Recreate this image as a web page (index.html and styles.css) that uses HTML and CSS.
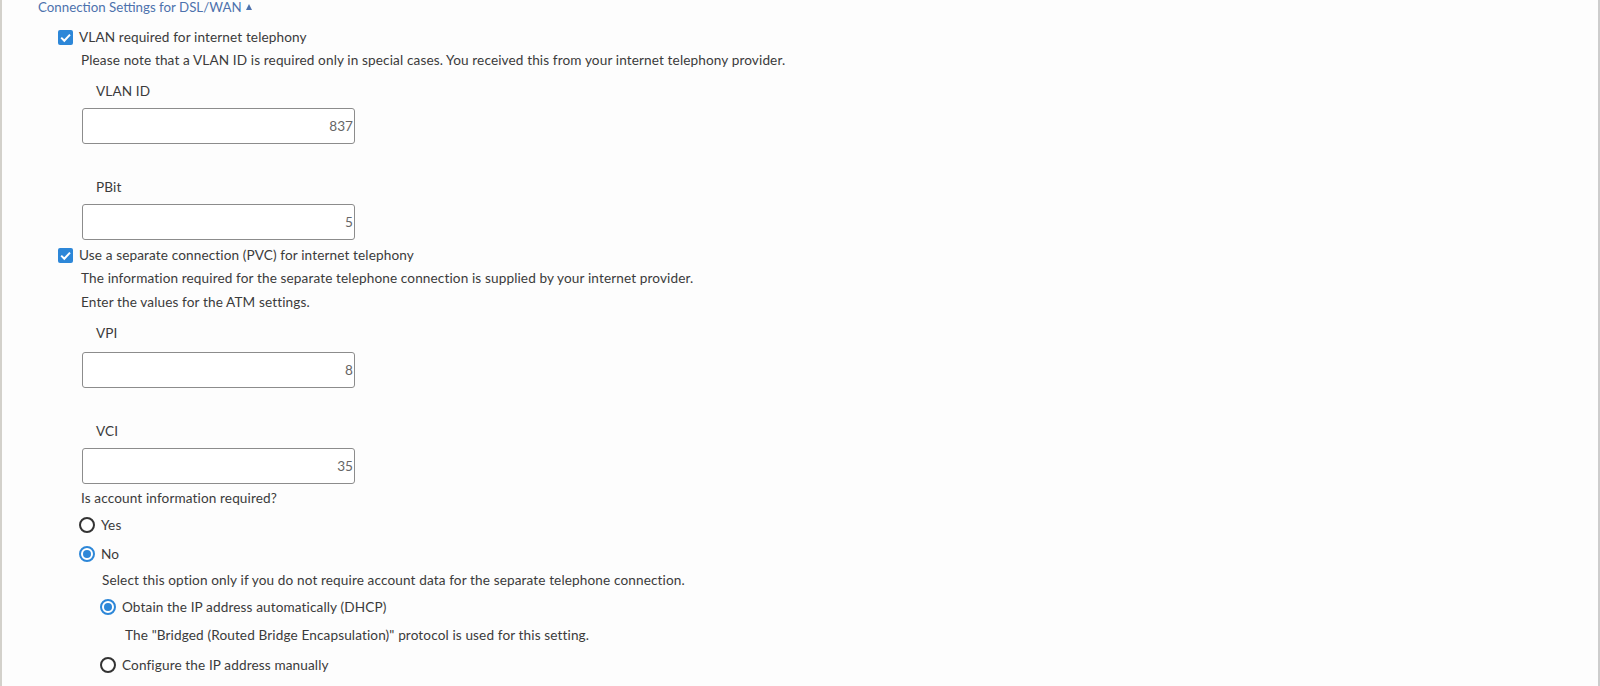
FILE: index.html
```html
<!DOCTYPE html>
<html lang="en">
<head>
<meta charset="utf-8">
<title>Connection Settings for DSL/WAN</title>
<link rel="stylesheet" href="styles.css">
</head>
<body>
<div class="frame">
  <div class="section-title">Connection Settings for DSL/WAN <span class="caret"></span></div>

  <div class="opt">
    <div class="check-row">
      <span class="cb"><svg viewBox="0 0 15 15" width="15" height="15"><rect x="0" y="0" width="15" height="15" rx="2" fill="#2d87d8"/><polyline points="3.2,7.6 6.3,10.7 12,4.6" fill="none" stroke="#fff" stroke-width="2"/></svg></span>
      <span class="check-label">VLAN required for internet telephony</span>
    </div>
    <div class="opt-body">
      <p class="hint">Please note that a VLAN ID is required only in special cases. You received this from your internet telephony provider.</p>
      <div class="field">
        <div class="field-label">VLAN ID</div>
        <input class="field-input" type="text" value="837">
      </div>
      <div class="field">
        <div class="field-label">PBit</div>
        <input class="field-input" type="text" value="5">
      </div>
    </div>
  </div>

  <div class="opt opt-second">
    <div class="check-row">
      <span class="cb"><svg viewBox="0 0 15 15" width="15" height="15"><rect x="0" y="0" width="15" height="15" rx="2" fill="#2d87d8"/><polyline points="3.2,7.6 6.3,10.7 12,4.6" fill="none" stroke="#fff" stroke-width="2"/></svg></span>
      <span class="check-label">Use a separate connection (PVC) for internet telephony</span>
    </div>
    <div class="opt-body">
      <p class="hint">The information required for the separate telephone connection is supplied by your internet provider.</p>
      <p class="hint">Enter the values for the ATM settings.</p>
      <div class="field field-atm">
        <div class="field-label">VPI</div>
        <input class="field-input" type="text" value="8">
      </div>
      <div class="field">
        <div class="field-label">VCI</div>
        <input class="field-input" type="text" value="35">
      </div>
      <p class="hint question">Is account information required?</p>
      <div class="radio-group">
        <div class="radio-row"><span class="radio"></span><span class="radio-label">Yes</span></div>
        <div class="radio-row"><span class="radio checked"></span><span class="radio-label">No</span></div>
        <div class="sub">
          <p class="hint">Select this option only if you do not require account data for the separate telephone connection.</p>
          <div class="radio-row"><span class="radio checked"></span><span class="radio-label">Obtain the IP address automatically (DHCP)</span></div>
          <p class="hint sub-hint">The "Bridged (Routed Bridge Encapsulation)" protocol is used for this setting.</p>
          <div class="radio-row"><span class="radio"></span><span class="radio-label">Configure the IP address manually</span></div>
        </div>
      </div>
    </div>
  </div>
</div>
</body>
</html>
```
FILE: styles.css
```css
html, body {
  margin: 0;
  padding: 0;
  background: #fdfdfd;
}

body {
  font-family: "Lato", "Liberation Sans", sans-serif;
  font-size: 13.6px;
  letter-spacing: 0.12px;
  color: #3b3b3b;
}

.frame {
  box-sizing: border-box;
  height: 686px;
  overflow: hidden;
  border-left: 2px solid #d3d1cb;
  border-right: 2px solid #cdcdcd;
  padding-left: 36px;
  background: #fdfdfd;
}

.section-title {
  display: flex;
  align-items: center;
  font-size: 13.3px;
  letter-spacing: 0;
  line-height: 15px;
  height: 15px;
  color: #4d72ad;
  margin-bottom: 9px;
}

.caret {
  display: block;
  width: 0;
  height: 0;
  margin-left: 4px;
  margin-bottom: 2px;
  border-left: 3.5px solid transparent;
  border-right: 3.5px solid transparent;
  border-bottom: 6px solid #4d72ad;
}

.opt {
  margin-left: 20px;
}

.opt-second {
  margin-top: 2px;
}

.check-row {
  display: flex;
  align-items: center;
  height: 24px;
}

.cb {
  display: block;
  width: 15px;
  height: 15px;
  margin-right: 6px;
  margin-top: 2px;
}

.cb svg {
  display: block;
}

.check-label {
  line-height: 24px;
  margin-top: 1px;
}

.opt-body {
  padding-left: 23px;
}

.hint {
  margin: 0;
  line-height: 24px;
}

.field {
  margin-top: 9px;
}

.field + .field {
  margin-top: 33px;
}

.field-atm .field-input {
  margin-top: 9px;
}

.field-label {
  line-height: 20px;
  padding-left: 15px;
}

.field-input {
  display: block;
  box-sizing: border-box;
  width: 273px;
  height: 36px;
  margin: 7px 0 0 1px;
  padding: 0 1px 0 8px;
  border: 1px solid #8c8c8c;
  border-radius: 3px;
  background: #fff;
  font-family: "Lato", "Liberation Sans", sans-serif;
  font-size: 13.6px;
  color: #666;
  text-align: right;
  outline: none;
}

.question {
  margin-top: 2px;
}

.radio-group {
  margin-left: -2px;
}

.radio-row {
  display: flex;
  align-items: center;
  height: 29px;
}

.radio {
  box-sizing: border-box;
  width: 16px;
  height: 16px;
  border: 2px solid #333;
  border-radius: 50%;
  margin-right: 6px;
  background: #fff;
  position: relative;
  flex: none;
}

.radio.checked {
  border: 2px solid #2d87d8;
}

.radio.checked::after {
  content: "";
  position: absolute;
  left: 2px;
  top: 2px;
  width: 8px;
  height: 8px;
  border-radius: 50%;
  background: #2d87d8;
}

.sub {
  padding-left: 23px;
}

.sub .radio-row {
  margin-left: -2px;
}

.sub-hint {
  line-height: 29px;
  padding-left: 23px;
}
```
